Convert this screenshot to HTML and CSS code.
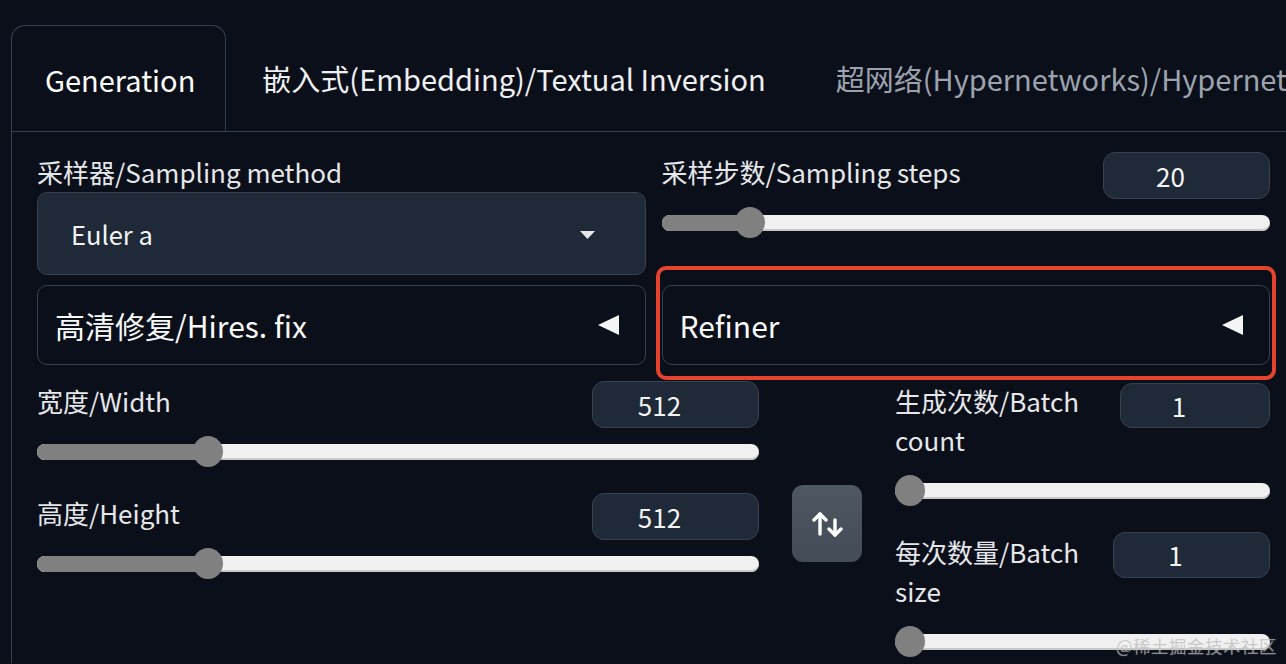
FILE: index.html
```html
<!DOCTYPE html>
<html lang="zh">
<head>
<meta charset="utf-8">
<title>Generation</title>
<link rel="stylesheet" href="styles.css">
</head>
<body>
<div class="app">
  <div class="tabs">
    <div class="tab active">Generation</div>
    <div class="tab">嵌入式(Embedding)/Textual Inversion</div>
    <div class="tab dim">超网络(Hypernetworks)/Hypernetworks</div>
  </div>
  <div class="panel">
    <div class="row row-top">
      <div class="col">
        <div class="label dd-label">采样器/Sampling method</div>
        <div class="dropdown">
          <span>Euler a</span>
          <svg class="caret" width="15" height="8" viewBox="0 0 15 8"><polygon points="0,0 15,0 7.5,8" fill="#e5e7eb"/></svg>
        </div>
      </div>
      <div class="col">
        <div class="field-head">
          <div class="label">采样步数/Sampling steps</div>
          <div class="num num-steps">20</div>
        </div>
        <div class="slider" style="--p:0.1275">
          <div class="track"><div class="fill"></div></div>
          <div class="thumb"></div>
        </div>
      </div>
    </div>

    <div class="row row-acc">
      <div class="accordion">
        <span>高清修复/Hires. fix</span>
        <svg class="tri" width="22" height="20" viewBox="0 0 22 20"><polygon points="0,10 21,0 21,20" fill="#f3f4f6"/></svg>
      </div>
      <div class="accordion highlighted">
        <span>Refiner</span>
        <svg class="tri" width="22" height="20" viewBox="0 0 22 20"><polygon points="0,10 21,0 21,20" fill="#f3f4f6"/></svg>
      </div>
    </div>

    <div class="row row-dims">
      <div class="dims">
        <div class="block">
          <div class="field-head">
            <div class="label">宽度/Width</div>
            <div class="num num-dim">512</div>
          </div>
          <div class="slider" style="--p:0.2258">
            <div class="track"><div class="fill"></div></div>
            <div class="thumb"></div>
          </div>
        </div>
        <div class="block">
          <div class="field-head">
            <div class="label">高度/Height</div>
            <div class="num num-dim">512</div>
          </div>
          <div class="slider" style="--p:0.2258">
            <div class="track"><div class="fill"></div></div>
            <div class="thumb"></div>
          </div>
        </div>
      </div>

      <button class="swap" type="button" aria-label="swap">
        <svg width="32" height="25" viewBox="0 0 32 25" fill="none" stroke="#ffffff" stroke-width="3.4" stroke-linecap="round" stroke-linejoin="round">
          <line x1="8" y1="2" x2="8" y2="22"/>
          <polyline points="2,8 8,2 14,8"/>
          <line x1="23" y1="8" x2="23" y2="23"/>
          <polyline points="17,17 23,23 29,17"/>
        </svg>
      </button>

      <div class="batch">
        <div class="block">
          <div class="field-head">
            <div class="label wrap">生成次数/Batch count</div>
            <div class="num num-count">1</div>
          </div>
          <div class="slider" style="--p:0">
            <div class="track"><div class="fill"></div></div>
            <div class="thumb"></div>
          </div>
        </div>
        <div class="block">
          <div class="field-head">
            <div class="label wrap">每次数量/Batch size</div>
            <div class="num num-size">1</div>
          </div>
          <div class="slider" style="--p:0">
            <div class="track"><div class="fill"></div></div>
            <div class="thumb"></div>
          </div>
        </div>
      </div>
    </div>
  </div>
  <div class="watermark">@稀土掘金技术社区</div>
</div>
</body>
</html>
```

FILE: styles.css
```css
* { box-sizing: border-box; }

html, body {
  margin: 0;
  padding: 0;
  background: #0b0f19;
  width: 1286px;
  height: 664px;
  overflow: hidden;
}

body {
  font-family: "Noto Sans CJK SC", "Noto Sans", sans-serif;
  color: #e5e7eb;
}

.app {
  position: relative;
  padding: 25px 0 0 11px;
  height: 664px;
}

/* tabs */
.tabs {
  display: flex;
  align-items: stretch;
  border-bottom: 1px solid #374151;
  height: 107px;
  white-space: nowrap;
  overflow: hidden;
}

.tab {
  font-size: 29px;
  line-height: 106px;
  padding: 0 34px 0 36px;
  color: #eef0f3;
  flex: none;
}

.tab.active {
  border: 1px solid #374151;
  border-bottom: none;
  border-radius: 14px 14px 0 0;
  padding: 0 30px 0 33px;
  background: #0b0f19;
  color: #ffffff;
  height: 107px;
  position: relative;
  z-index: 1;
}

.tab.dim {
  color: #9ca3af;
}

/* panel */
.panel {
  border-left: 1px solid #374151;
  padding: 21px 16px 0 25px;
  height: 532px;
  margin-top: -1px;
}

.row {
  display: flex;
  gap: 16px;
}

.col {
  flex: 1;
  min-width: 0;
  display: flex;
  flex-direction: column;
}

.label {
  font-size: 26px;
  line-height: 39px;
  padding-bottom: 8px;
  color: #e5e7eb;
}

.dd-label {
  padding-bottom: 0;
  margin-bottom: 1px;
}

.dropdown {
  height: 83px;
  border: 1px solid #374151;
  border-radius: 10px;
  background: #1f2937;
  display: flex;
  align-items: center;
  justify-content: space-between;
  padding: 0 50px 0 33px;
  font-size: 25.5px;
  color: #f3f4f6;
}

.caret { display: block; margin-top: 2px; }

.field-head {
  display: flex;
  justify-content: space-between;
  align-items: flex-start;
}

.num {
  height: 47px;
  border: 1px solid #374151;
  border-radius: 12px;
  background: #1f2937;
  font-size: 26px;
  line-height: 45px;
  text-align: center;
  padding-right: 32px;
  color: #f3f4f6;
  flex: none;
}

.num-steps { width: 167px; }
.num-dim { width: 167px; }
.num-count { width: 150px; height: 45px; line-height: 43px; margin-top: 2px; }
.num-size { width: 157px; height: 46px; line-height: 44px; }

/* slider */
.slider {
  position: relative;
  height: 31px;
  margin-top: 8px;
  display: flex;
  align-items: center;
}

.track {
  flex: 1;
  height: 16px;
  border-radius: 8px;
  background: #f0f0f0;
  box-shadow: inset 0 -2px 0 #c8c8c8;
  overflow: hidden;
}

.fill {
  height: 100%;
  width: calc(var(--p) * (100% - 30px) + 15px);
  background: #808080;
}

.thumb {
  position: absolute;
  top: 0;
  left: calc(var(--p) * (100% - 30px));
  width: 30px;
  height: 31px;
  border-radius: 50%;
  background: #808080;
}

/* accordions */
.row-acc {
  margin-top: 10px;
}

.accordion {
  flex: 1;
  height: 80px;
  border: 1px solid #374151;
  border-radius: 10px;
  background: #0b0f19;
  display: flex;
  align-items: center;
  justify-content: space-between;
  padding: 0 25px 0 17px;
  font-size: 30px;
  color: #f9fafb;
  position: relative;
}

.tri { display: block; }

.accordion.highlighted::before {
  content: "";
  position: absolute;
  top: -20px;
  left: -7px;
  right: -7px;
  bottom: -16px;
  border: 4px solid #e5432d;
  border-radius: 10px;
  pointer-events: none;
}

/* dimensions row */
.row-dims {
  margin-top: 16px;
  gap: 33px;
  align-items: flex-start;
}

.dims {
  width: 722px;
  flex: none;
  display: flex;
  flex-direction: column;
  gap: 26px;
}

.swap {
  flex: none;
  width: 70px;
  height: 77px;
  margin-top: 104px;
  border: none;
  border-radius: 11px;
  background: linear-gradient(180deg, #4f5763 0%, #434b57 100%);
  display: flex;
  align-items: center;
  justify-content: center;
  padding: 0;
}

.swap svg { display: block; margin-top: 1px; margin-left: 2px; }

.batch {
  flex: 1;
  min-width: 0;
  display: flex;
  flex-direction: column;
  gap: 26px;
}

.label.wrap {
  flex: 1;
  padding-right: 20px;
}

.watermark {
  position: absolute;
  right: 9px;
  bottom: 6px;
  font-size: 17.5px;
  line-height: 24px;
  color: rgba(170, 170, 170, 0.6);
  text-shadow: 0 0 1px rgba(255, 255, 255, 0.4);
  letter-spacing: 0.5px;
}
```
